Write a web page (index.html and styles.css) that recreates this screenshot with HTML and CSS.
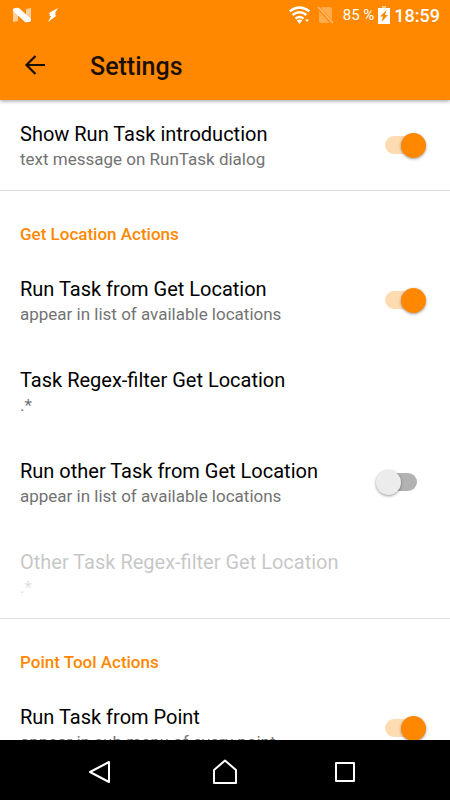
FILE: index.html
```html
<!DOCTYPE html>
<html lang="en">
<head>
<meta charset="utf-8">
<meta name="viewport" content="width=device-width, initial-scale=1">
<title>Settings</title>
<link rel="stylesheet" href="styles.css">
</head>
<body>
<header class="app-header">
  <div class="status-bar">
    <div class="status-group status-left">
      <svg width="18" height="14" viewBox="0 0 18 14" aria-hidden="true"><path d="M0 1l5-1v13l-5 1zM13 1l5-1v13l-5 1z" fill="#fff" opacity=".6"/><path d="M0 1Q3-1 6 0L18 11v2q-3 2-6 1L0 3z" fill="#fff"/></svg>
      <svg width="10" height="14" viewBox="0 0 10 14" aria-hidden="true"><path d="M10 0L1 5l1 2-1 1h2L0 14l8-6-1-2 1-1H7z" fill="#fff"/></svg>
    </div>
    <div class="status-group status-right">
      <svg class="wifi" width="21" height="18" viewBox="0 0 21 18" aria-hidden="true"><g fill="none" stroke="#fff" stroke-width="2.300"><path d="M.7 5.300Q10.500-2.300 20.300 5.300"/><path d="M3.600 9Q10.500 3.500 17.400 9"/><path d="M6.500 12.600Q10.500 9.500 14.500 12.600"/></g><path d="M7.800 14.500q2.700-1.800 5.400 0L10.500 18zM16 13.500h4L18 16z" fill="#fff"/></svg>
      <svg class="no-sim" width="17" height="18" viewBox="0 0 17 18" aria-hidden="true"><path d="M5 1h8q2 0 2 2v11L4 2.500zM2 5l11 12H4q-2 0-2-2z" fill="#fff" opacity=".3"/><path d="M1 1l15 16" stroke="#fff" stroke-width="1.500" opacity=".45"/></svg>
      <span class="battery-level">85 %</span>
      <svg class="battery" width="12" height="18" viewBox="0 0 12 18" aria-hidden="true"><path d="M4 0h4v2H4z" fill="#fff" opacity=".6"/><path d="M0 2h12v16H0z" fill="#fff"/><path d="M8.500 4L2 10.500h3L3.500 16 10 9H7z" fill="#ff8800"/></svg>
      <time class="clock">18:59</time>
    </div>
  </div>
  <div class="toolbar">
    <button class="back" type="button" aria-label="Back"><svg width="20" height="20" viewBox="0 0 20 20" aria-hidden="true"><path d="M20 10H1.500M10.500 1L1.500 10l9 9" fill="none" stroke="#1b0f00" stroke-width="2.200"/></svg></button>
    <h1 class="page-title">Settings</h1>
  </div>
</header>

<main class="settings">
  <section class="group">
    <label class="row">
      <span class="copy"><span class="title">Show Run Task introduction</span><span class="summary">text message on RunTask dialog</span></span>
      <input class="switch" type="checkbox" role="switch" checked>
    </label>
  </section>

  <section class="group">
    <h2 class="group-title">Get Location Actions</h2>
    <label class="row">
      <span class="copy"><span class="title">Run Task from Get Location</span><span class="summary">appear in list of available locations</span></span>
      <input class="switch" type="checkbox" role="switch" checked>
    </label>
    <button class="row" type="button">
      <span class="copy"><span class="title">Task Regex-filter Get Location</span><span class="summary">.*</span></span>
    </button>
    <label class="row">
      <span class="copy"><span class="title">Run other Task from Get Location</span><span class="summary">appear in list of available locations</span></span>
      <input class="switch" type="checkbox" role="switch">
    </label>
    <button class="row" type="button" disabled>
      <span class="copy"><span class="title">Other Task Regex-filter Get Location</span><span class="summary">.*</span></span>
    </button>
  </section>

  <section class="group">
    <h2 class="group-title">Point Tool Actions</h2>
    <label class="row">
      <span class="copy"><span class="title">Run Task from Point</span><span class="summary">appear in sub menu of every point</span></span>
      <input class="switch" type="checkbox" role="switch" checked>
    </label>
  </section>
</main>

<nav class="nav-bar" aria-label="System navigation">
  <button class="nav-button" type="button" aria-label="Back"><svg width="26" height="26" viewBox="0 0 26 26"><path d="M17 3v20L-2 13z"/></svg></button>
  <button class="nav-button" type="button" aria-label="Home"><svg width="26" height="26" viewBox="0 0 26 26"><path d="M2 11L13 1.500 24 11v13H2z"/></svg></button>
  <button class="nav-button" type="button" aria-label="Recent apps"><svg width="26" height="26" viewBox="0 0 26 26"><path d="M4 4h18v18H4z"/></svg></button>
</nav>
</body>
</html>
```
FILE: styles.css
```css
* {
  box-sizing: border-box;
}

body {
  margin: 0;
  height: 100vh;
  display: flex;
  flex-direction: column;
  background: #fff;
  color: #000;
  font-family: Roboto, "Liberation Sans", sans-serif;
}

button {
  margin: 0;
  padding: 0;
  border: 0;
  background: none;
  color: inherit;
  font: inherit;
}

svg {
  display: block;
  overflow: visible;
}

.app-header {
  position: relative;
  z-index: 1;
  flex: none;
  background: #ff8800;
  box-shadow: 0 1px 4px rgba(0, 0, 0, 0.4);
}

.status-bar {
  display: flex;
  justify-content: space-between;
  align-items: center;
  height: 30px;
  padding: 0 10px 0 13px;
  color: #fff;
}

.status-group {
  display: flex;
  align-items: center;
}

.status-left {
  gap: 17px;
}

.status-right {
  gap: 4px;
}

.no-sim {
  margin: 0 5px 0 3px;
}

.battery-level {
  font-size: 15px;
}

.clock {
  font-size: 18px;
  font-weight: 500;
}

.toolbar {
  display: flex;
  align-items: center;
  height: 70px;
}

.back {
  display: grid;
  place-items: center;
  width: 70px;
  height: 70px;
}

.page-title {
  margin: 0;
  padding: 4px 20px 0;
  color: #1b0f00;
  font-size: 25px;
  font-weight: 500;
  line-height: 30px;
}

.settings {
  flex: 1;
  min-height: 0;
  overflow: hidden;
}

.group {
  display: flex;
  flex-direction: column;
  gap: 1px;
}

.group + .group {
  border-top: 1px solid #dedede;
}

.group-title {
  margin: 0;
  padding: 32px 20px 8px;
  color: #ff8800;
  font-size: 17px;
  font-weight: 500;
  line-height: 23px;
}

.row {
  display: flex;
  justify-content: space-between;
  align-items: center;
  width: 100%;
  padding: 19px 24px 19px 20px;
  text-align: left;
}

.row:disabled {
  opacity: 0.22;
}

.copy {
  display: flex;
  flex-direction: column;
  padding-top: 2px;
}

.title {
  font-size: 20px;
  line-height: 26px;
}

.summary {
  color: #737373;
  font-size: 17px;
  line-height: 24px;
}

.switch {
  appearance: none;
  display: grid;
  align-items: center;
  flex: none;
  width: 50px;
  height: 26px;
  margin: 0;
}

.switch::before,
.switch::after {
  content: "";
  grid-area: 1 / 1;
}

.switch::before {
  justify-self: center;
  width: 32px;
  height: 18px;
  border-radius: 9px;
  background: #b2b2b2;
}

.switch::after {
  width: 25px;
  height: 25px;
  border-radius: 50%;
  background: #ececec;
  box-shadow: 0 1px 3px rgba(0, 0, 0, 0.4);
}

.switch:checked::before {
  background: #ffdbb2;
}

.switch:checked::after {
  justify-self: end;
  background: #ff8800;
}

.nav-bar {
  display: flex;
  justify-content: center;
  flex: none;
  height: 60px;
  background: #000;
}

.nav-button {
  display: grid;
  place-items: center;
  width: 120px;
  padding-top: 4px;
}

.nav-button svg {
  fill: none;
  stroke: #fff;
  stroke-width: 2;
  stroke-linejoin: round;
}
```
